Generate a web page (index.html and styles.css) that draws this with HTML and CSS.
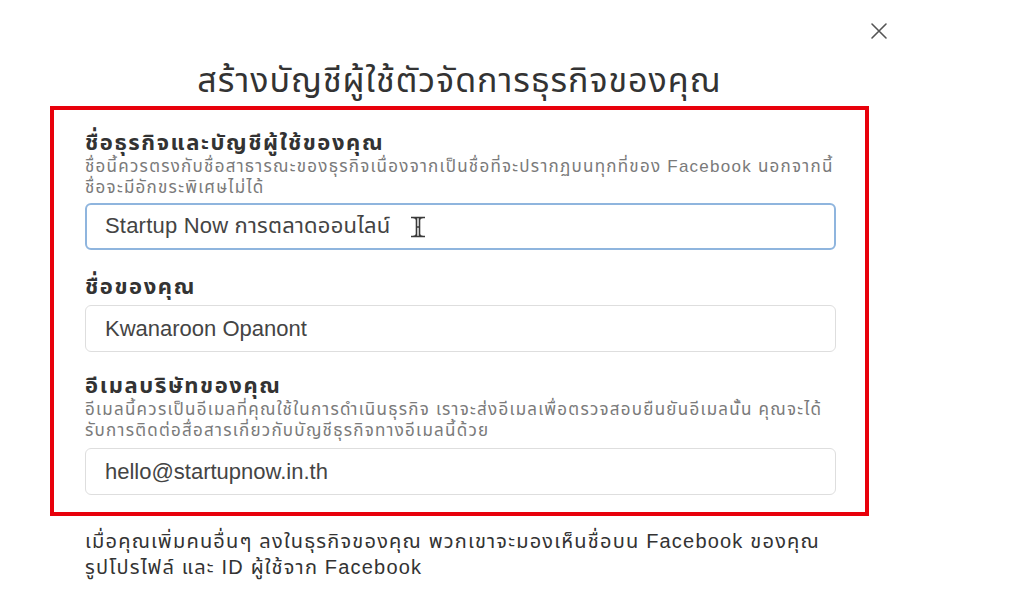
FILE: index.html
```html
<!DOCTYPE html>
<html lang="th">
<head>
<meta charset="utf-8">
<link rel="stylesheet" href="styles.css">
</head>
<body>
<div class="page">
  <div class="topbar">
    <button class="close" aria-label="ปิด">
      <svg width="18" height="18" viewBox="0 0 18 18"><path d="M2 2 L16 16 M16 2 L2 16" stroke="#555" stroke-width="1.6" fill="none" stroke-linecap="round"/></svg>
    </button>
  </div>
  <div class="modal">
    <h1 class="title">สร้างบัญชีผู้ใช้ตัวจัดการธุรกิจของคุณ</h1>
    <div class="highlight">
      <div class="field">
        <div class="label">ชื่อธุรกิจและบัญชีผู้ใช้ของคุณ</div>
        <div class="desc">ชื่อนี้ควรตรงกับชื่อสาธารณะของธุรกิจเนื่องจากเป็นชื่อที่จะปรากฏบนทุกที่ของ Facebook นอกจากนี้<br>ชื่อจะมีอักขระพิเศษไม่ได้</div>
        <div class="input focused">
          <span>Startup Now การตลาดออนไลน์</span>
          <svg class="ibeam" width="16" height="22" viewBox="0 0 16 22"><path d="M1 1.5 H15 M1 20.5 H15 M6.5 2 V20 M9.5 2 V20 M6.5 11 H9.5" stroke="#3a3a3a" stroke-width="1.6" fill="none"/><path d="M3 1.5 Q6.5 2 6.5 4 M13 1.5 Q9.5 2 9.5 4 M3 20.5 Q6.5 20 6.5 18 M13 20.5 Q9.5 20 9.5 18" stroke="#3a3a3a" stroke-width="1.2" fill="none"/></svg>
        </div>
      </div>
      <div class="field second">
        <div class="label">ชื่อของคุณ</div>
        <div class="input"><span>Kwanaroon Opanont</span></div>
      </div>
      <div class="field third">
        <div class="label">อีเมลบริษัทของคุณ</div>
        <div class="desc">อีเมลนี้ควรเป็นอีเมลที่คุณใช้ในการดำเนินธุรกิจ เราจะส่งอีเมลเพื่อตรวจสอบยืนยันอีเมลนั้น คุณจะได้<br>รับการติดต่อสื่อสารเกี่ยวกับบัญชีธุรกิจทางอีเมลนี้ด้วย</div>
        <div class="input email"><span>hello@startupnow.in.th</span></div>
      </div>
    </div>
    <p class="note">เมื่อคุณเพิ่มคนอื่นๆ ลงในธุรกิจของคุณ พวกเขาจะมองเห็นชื่อบน Facebook ของคุณ<br>รูปโปรไฟล์ และ ID ผู้ใช้จาก Facebook</p>
  </div>
</div>
</body>
</html>
```

FILE: styles.css
```css
* { box-sizing: border-box; }
html, body { margin: 0; padding: 0; background: #ffffff; }
body {
  font-family: "Liberation Sans", "Noto Sans Thai", sans-serif;
  color: #333;
  width: 1024px;
  height: 599px;
  overflow: hidden;
}
.page { padding-left: 50px; }
.topbar {
  width: 838px;
  height: 50px;
  display: flex;
  justify-content: flex-end;
  align-items: flex-start;
  padding-top: 22px;
}
.close {
  border: 0;
  background: transparent;
  padding: 0;
  width: 18px;
  height: 18px;
  display: flex;
}
.modal { width: 819px; }
.title {
  margin: 0;
  height: 56px;
  text-align: center;
  font-size: 34px;
  font-weight: 400;
  letter-spacing: 1px;
  line-height: 60px;
  color: #333;
}
.highlight {
  border: 4px solid #e8000b;
  padding: 22px 29px 17px 31px;
}
.label {
  font-size: 22px;
  font-weight: 700;
  letter-spacing: 1.6px;
  line-height: 22px;
  color: #333;
}
.desc {
  font-size: 17px;
  letter-spacing: 1.25px;
  line-height: 21px;
  padding-top: 2px;
  margin-bottom: -2px;
  color: #7a7a7a;
}
.input {
  margin-top: 7px;
  height: 47px;
  border: 1px solid #dedede;
  border-radius: 6px;
  display: flex;
  align-items: center;
  padding-left: 19px;
  font-size: 22px;
  color: #444;
  gap: 20px;
}
.input.focused {
  border: 2px solid #8fb5de;
  padding-left: 18px;
  letter-spacing: 0.2px;
}
.ibeam { margin-top: 1px; }
.second { margin-top: 26px; }
.third { margin-top: 23px; }
.input.email { margin-top: 9px; }
.note {
  margin: 12px 0 0 35px;
  font-size: 20px;
  letter-spacing: 1.2px;
  line-height: 26px;
  color: #333;
}
```
